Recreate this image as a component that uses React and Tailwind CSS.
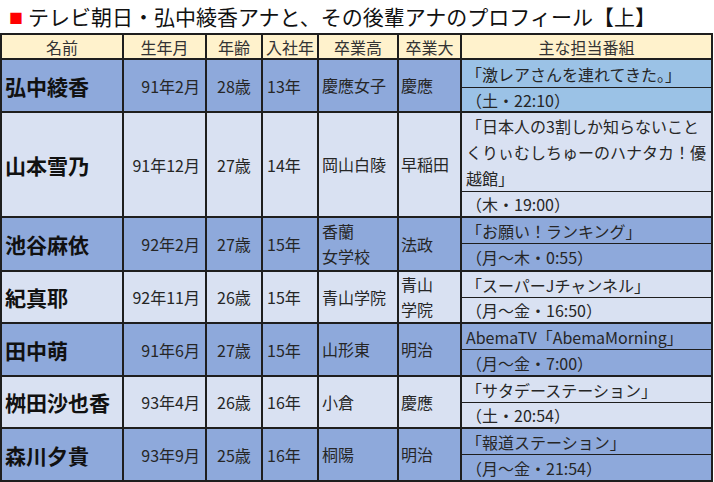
import React from "react";

const rows = [
  { name: "弘中綾香", birth: "91年2月", age: "28歳", join: "13年", hs: ["慶應女子"], univ: ["慶應"], prog: ["「激レアさんを連れてきた。」"], time: "（土・22:10）", bg: "bg-[#8ea9db]", pbg: "bg-[#9bc2e6]", pl: "leading-[24px]" },
  { name: "山本雪乃", birth: "91年12月", age: "27歳", join: "14年", hs: ["岡山白陵"], univ: ["早稲田"], prog: ["「日本人の3割しか知らないこと", "くりぃむしちゅーのハナタカ！優", "越館」"], time: "（木・19:00）", bg: "bg-[#d9e1f2]", pbg: "bg-[#d9e1f2]", pl: "leading-[26px]" },
  { name: "池谷麻依", birth: "92年2月", age: "27歳", join: "15年", hs: ["香蘭", "女学校"], univ: ["法政"], prog: ["「お願い！ランキング」"], time: "（月～木・0:55）", bg: "bg-[#8ea9db]", pbg: "bg-[#8ea9db]", pl: "leading-[24px]" },
  { name: "紀真耶", birth: "92年11月", age: "26歳", join: "15年", hs: ["青山学院"], univ: ["青山", "学院"], prog: ["「スーパーJチャンネル」"], time: "（月～金・16:50）", bg: "bg-[#d9e1f2]", pbg: "bg-[#d9e1f2]", pl: "leading-[24px]" },
  { name: "田中萌", birth: "91年6月", age: "27歳", join: "15年", hs: ["山形東"], univ: ["明治"], prog: ["AbemaTV「AbemaMorning」"], time: "（月～金・7:00）", bg: "bg-[#8ea9db]", pbg: "bg-[#8ea9db]", pl: "leading-[24px]" },
  { name: "桝田沙也香", birth: "93年4月", age: "26歳", join: "16年", hs: ["小倉"], univ: ["慶應"], prog: ["「サタデーステーション」"], time: "（土・20:54）", bg: "bg-[#d9e1f2]", pbg: "bg-[#d9e1f2]", pl: "leading-[24px]" },
  { name: "森川夕貴", birth: "93年9月", age: "25歳", join: "16年", hs: ["桐陽"], univ: ["明治"], prog: ["「報道ステーション」"], time: "（月～金・21:54）", bg: "bg-[#8ea9db]", pbg: "bg-[#8ea9db]", pl: "leading-[24px]" },
];

const bd = "border-r-2 border-b-2 border-[#1e1e1e]";
const head = `${bd} bg-[#fff2cc] text-[#333] flex items-center justify-center leading-[22px]`;

function Lines({ items }) {
  return (
    <div>
      {items.map((t, i) => (
        <div key={i} className="whitespace-nowrap">{t}</div>
      ))}
    </div>
  );
}

export default function App() {
  return (
    <div className="w-[714px] h-[482px] bg-white overflow-hidden text-[#262626]" style={{ fontFamily: '"Noto Sans CJK JP", "Noto Sans", sans-serif' }}>
      <div className="h-[33px] flex items-center pl-[9px] text-[21px] leading-none text-[#111]">
        <span className="text-[#ff0000] text-[14px] mr-[5px]">■</span>
        <span>テレビ朝日・弘中綾香アナと、その後輩アナのプロフィール【上】</span>
      </div>
      <div className="w-[713px] grid grid-cols-[122px_83px_56px_56px_80px_63px_251px] grid-rows-[25px_28px_25px_79px_26px_26px_28px_26px_26px_26px_27px_26px_26px_26px_27px] border-l-2 border-t-2 border-[#1e1e1e] text-[16px]">
        <div className={head}>名前</div>
        <div className={head}>生年月</div>
        <div className={head}>年齢</div>
        <div className={head}>入社年</div>
        <div className={head}>卒業高</div>
        <div className={head}>卒業大</div>
        <div className={head}>主な担当番組</div>
        {rows.map((r, i) => (
          <React.Fragment key={i}>
            <div className={`${bd} ${r.bg} row-span-2 flex items-center pl-[3px] text-[21px] font-bold text-[#111] leading-[24px] whitespace-nowrap`}>{r.name}</div>
            <div className={`${bd} ${r.bg} row-span-2 flex items-center justify-end pr-[5px] leading-[22px] whitespace-nowrap`}>{r.birth}</div>
            <div className={`${bd} ${r.bg} row-span-2 flex items-center justify-center leading-[22px]`}>{r.age}</div>
            <div className={`${bd} ${r.bg} row-span-2 flex items-center pl-[4px] leading-[22px]`}>{r.join}</div>
            <div className={`${bd} ${r.bg} row-span-2 flex items-center pl-[3px] leading-[25px]`}><Lines items={r.hs} /></div>
            <div className={`${bd} ${r.bg} row-span-2 flex items-center pl-[2px] leading-[25px]`}><Lines items={r.univ} /></div>
            <div className={`border-r-2 border-b border-[#1e1e1e] ${r.pbg} flex items-center pl-[4px] ${r.pl}`}><Lines items={r.prog} /></div>
            <div className={`${bd} ${r.pbg} flex items-center pl-[4px] leading-[22px] whitespace-nowrap`}>{r.time}</div>
          </React.Fragment>
        ))}
      </div>
    </div>
  );
}
